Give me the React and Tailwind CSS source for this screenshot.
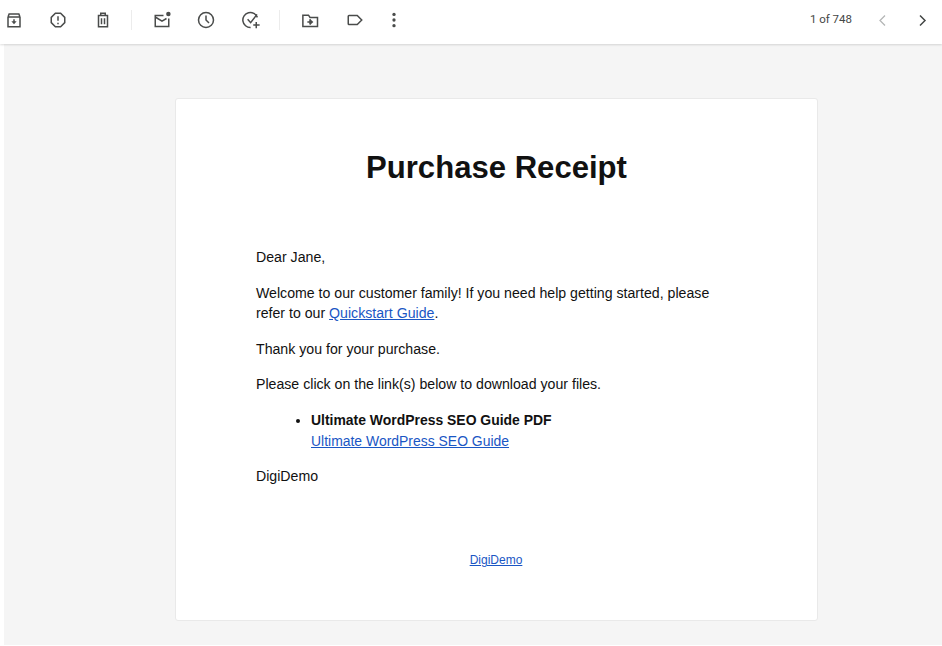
const Icon = ({ children, className = '' }) => (
  <svg viewBox="0 0 24 24" fill="none" stroke="#4a4c4b" strokeWidth="2" className={`w-[18px] h-[18px] shrink-0 ${className}`}>
    {children}
  </svg>
);

function Toolbar() {
  return (
    <div className="h-[44px] pb-[4px] bg-white flex items-center relative z-10 shadow-[0_1px_2px_rgba(0,0,0,0.14)] shrink-0">
      <div className="flex items-center pl-[5px]">
        {/* archive */}
        <Icon>
          <path d="M4 8V21H20V8M4 8L5.5 4H18.5L20 8M4 8H20" />
          <path d="M12 11V15" />
          <path d="M8.5 13.5H15.5L12 17.5Z" fill="#4a4c4b" stroke="none" />
        </Icon>
        {/* report spam */}
        <Icon className="ml-[26px]">
          <path d="M8.5 3H15.5L21 8.5V15.5L15.5 21H8.5L3 15.5V8.5Z" />
          <path d="M12 7V13M12 15.5V17.5" />
        </Icon>
        {/* trash */}
        <Icon className="ml-[26.5px]">
          <path d="M5 6H19M9 6V3H15V6M6 6V21H18V6M10 9.5V17.5M14 9.5V17.5" />
        </Icon>
        <div className="w-px h-[20px] bg-[#ececec] ml-[19.5px]" />
        {/* mark unread */}
        <Icon className="ml-[21px]">
          <path d="M14 6H3V20.5H21V10" />
          <path d="M3 8L12 13.5L18 10" />
          <circle cx="20.5" cy="4" r="3" fill="#4a4c4b" stroke="none" />
        </Icon>
        {/* snooze */}
        <Icon className="ml-[26px]">
          <circle cx="12" cy="12" r="10" />
          <path d="M12 6V12L16 16" />
        </Icon>
        {/* add to tasks */}
        <Icon className="ml-[26.5px]">
          <path d="M20.5 8.5A10 10 0 1 0 11.5 22" />
          <path d="M7.5 11L11.5 15.5L20 4.5M19 14.5V23M15 18.75H23.5" />
        </Icon>
        <div className="w-px h-[20px] bg-[#ececec] ml-[19.5px]" />
        {/* move to */}
        <Icon className="ml-[21px]">
          <path d="M2.5 20.5V5.5H10L12 8.5H22V20.5Z" />
          <path d="M12 11V18M8.5 14.5H13" />
          <path d="M12 10.5L16.5 14.5L12 18.5Z" fill="#4a4c4b" stroke="none" />
        </Icon>
        {/* labels */}
        <Icon className="ml-[26.5px]">
          <path d="M4 6H15L21 12L15 18H4Q3 18 3 17V7Q3 6 4 6Z" />
        </Icon>
        {/* more */}
        <svg viewBox="0 0 24 24" fill="#4a4c4b" className="w-[18px] h-[18px] ml-[21.5px]">
          <circle cx="12" cy="4.5" r="2.2" />
          <circle cx="12" cy="12" r="2.2" />
          <circle cx="12" cy="19.5" r="2.2" />
        </svg>
      </div>
      <div className="ml-auto flex items-center pr-[12.5px]">
        <span className="font-['Roboto',sans-serif] text-[11.5px] text-[#444746]">1 of 748</span>
        <svg viewBox="0 0 24 24" fill="none" stroke="#b4b6b6" strokeWidth="2" className="w-[15px] h-[15px] ml-[22.5px]">
          <path d="M16 4L8 12L16 20" />
        </svg>
        <svg viewBox="0 0 24 24" fill="none" stroke="#444746" strokeWidth="2.4" className="w-[15px] h-[15px] ml-[25px]">
          <path d="M8 4L16 12L8 20" />
        </svg>
      </div>
    </div>
  );
}

export default function App() {
  return (
    <div className="w-[942px] h-[646px] bg-white flex flex-col overflow-hidden font-['Liberation_Sans',Arial,sans-serif]">
      <Toolbar />
      <div className="flex-1 ml-[4px] mb-px bg-[#f5f5f5] pt-[54px] pl-[171px]">
        <div className="w-[643px] h-[523px] bg-white rounded-[3px] border border-[#e9e9e9] pt-[51px] pl-[80px] pr-[60px] text-[14.15px] leading-[20px] text-[#111111]">
          <h1 className="text-[31.1px] leading-[36px] font-bold text-center -ml-[80px] -mr-[60px] mb-[61px]">Purchase Receipt</h1>
          <p className="mb-[16px]">Dear Jane,</p>
          <p className="mb-[15.6px]">
            Welcome to our customer family! If you need help getting started, please<br />
            refer to our <a className="text-[#1a56c4] underline">Quickstart Guide</a>.
          </p>
          <p className="mb-[15.6px]">Thank you for your purchase.</p>
          <p className="mb-[15.6px]">Please click on the link(s) below to download your files.</p>
          <ul className="list-disc pl-[55px] mb-[14.6px] text-[13.95px] leading-[21px]">
            <li>
              <strong>Ultimate WordPress SEO Guide PDF</strong><br />
              <a className="text-[#1a56c4] underline">Ultimate WordPress SEO Guide</a>
            </li>
          </ul>
          <p>DigiDemo</p>
          <p className="text-center text-[12px] mt-[64px] -ml-[80px] -mr-[59px]">
            <a className="text-[#1a56c4] underline">DigiDemo</a>
          </p>
        </div>
      </div>
    </div>
  );
}
